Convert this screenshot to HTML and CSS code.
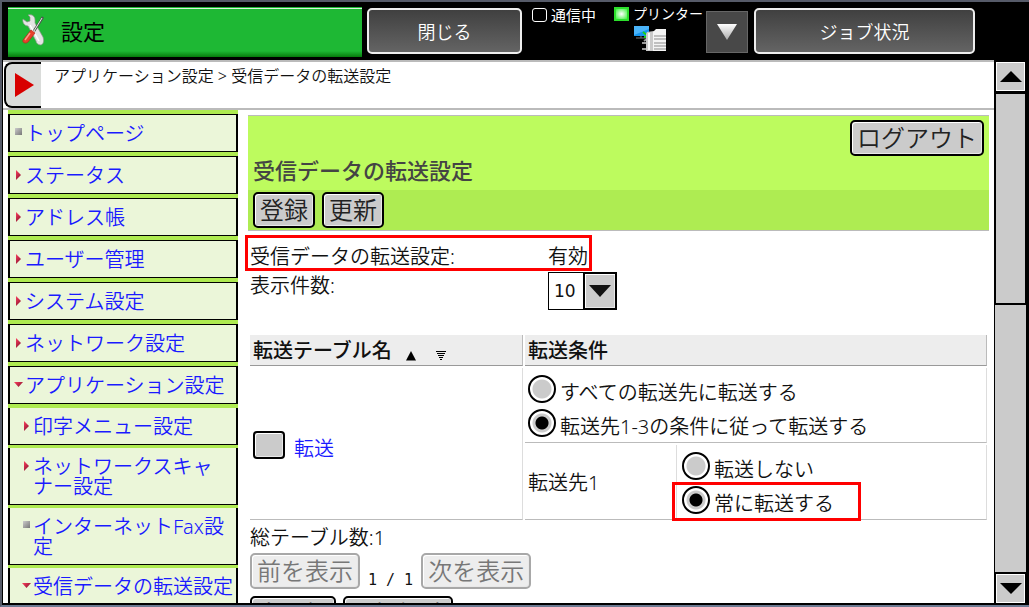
FILE: index.html
```html
<!DOCTYPE html>
<html lang="ja">
<head>
  <meta charset="UTF-8">
  <meta name="viewport" content="width=device-width, initial-scale=1.0">
  <title>受信データの転送設定</title>
  <link rel="stylesheet" href="styles.css">
</head>
<body>
  <header class="topbar">
    <div class="topbar-title">
      <svg class="tools-icon" viewBox="0 0 26 34" width="26" height="34" aria-hidden="true">
        <path d="M2 5l4 3 3-1 0-4-2-2c4-1 7 1 7 5l0 3 8 14c1 3 1 7-2 8-3 0-5-2-5-4L7 12C4 12 1 9 2 5z" fill="#e4e4e4" stroke="#8a958a" stroke-width=".7"/>
        <path d="M9 11l9 16" stroke="#fff" stroke-width="1.5"/>
        <path d="M22 3l-9 14" stroke="#4f5a50" stroke-width="2.5"/>
        <path d="M21 4l-8 13" stroke="#e8eee8" stroke-width="1"/>
        <path d="M10 16l4 3-7 9c-2 2-6 1-5-2z" fill="#e8412c" stroke="#b52a1c" stroke-width=".7"/>
        <path d="M9 19l-5 7" stroke="#ff9b86" stroke-width="1.5"/>
      </svg>
      <span>設定</span>
    </div>
    <button type="button" class="dark-btn close-btn">閉じる</button>
    <div class="status">
      <div class="status-item"><span class="lamp"></span>通信中</div>
    </div>
    <div class="status printer">
      <div class="status-item"><span class="lamp lamp-on"></span>プリンター</div>
      <svg class="printer-icon" viewBox="0 0 32 26" width="32" height="26" aria-hidden="true">
        <rect x="0" y="0" width="15" height="10" fill="#1595ee"/>
        <path d="M0 0h15v3L0 9z" fill="#4ab4fa"/>
        <path d="M2 12h10M7 10v2" stroke="#777" stroke-width="1"/>
        <path d="M9 6l5 4M14 6v5h-4" stroke="#19d219" stroke-width="2" fill="none"/>
        <path d="M8 17h5M8 23h5M10 15l3-2" stroke="#999" stroke-width="2"/>
        <path d="M13 6l7-1v20h-8V8z" fill="#c9c9c9"/>
        <path d="M15 7v17" stroke="#f6f6f6" stroke-width="2"/>
        <path d="M19 6l3-3h10v22H19z" fill="#f4f4f4"/>
        <path d="M20 10h12M20 13h12M20 17h12M20 20h12M20 23h12" stroke="#8b8b8b" stroke-width="1"/>
      </svg>
    </div>
    <button type="button" class="drop-btn" aria-label="プリンター">
      <svg viewBox="0 0 20 16" width="20" height="16" aria-hidden="true">
        <defs><linearGradient id="dropFill" x2="0" y2="1"><stop stop-color="#fff"/><stop offset="1" stop-color="#aaa"/></linearGradient></defs>
        <path d="M0 0h20L10 16z" fill="url(#dropFill)"/>
      </svg>
    </button>
    <button type="button" class="dark-btn job-btn">ジョブ状況</button>
  </header>

  <div class="viewer">
    <div class="page">
      <div class="crumbs">
        <button type="button" class="toggle-btn" aria-label="メニュー">
          <svg viewBox="0 0 19 24" width="19" height="24" aria-hidden="true"><path d="M0 0l19 12L0 24z" fill="#d80000"/></svg>
        </button>
        <p class="crumb-text">アプリケーション設定 &gt; 受信データの転送設定</p>
      </div>

      <div class="columns">
        <nav class="menu">
          <a class="menu-item" href="#"><i class="mark mark-box"></i>トップページ</a>
          <a class="menu-item" href="#"><i class="mark mark-right"></i>ステータス</a>
          <a class="menu-item" href="#"><i class="mark mark-right"></i>アドレス帳</a>
          <a class="menu-item" href="#"><i class="mark mark-right"></i>ユーザー管理</a>
          <a class="menu-item" href="#"><i class="mark mark-right"></i>システム設定</a>
          <a class="menu-item" href="#"><i class="mark mark-right"></i>ネットワーク設定</a>
          <a class="menu-item" href="#"><i class="mark mark-down"></i>アプリケーション設定</a>
          <div class="submenu">
            <a class="menu-item sub" href="#"><i class="mark mark-right"></i>印字メニュー設定</a>
            <a class="menu-item sub" href="#"><i class="mark mark-right"></i>ネットワークスキャナー設定</a>
            <a class="menu-item sub" href="#"><i class="mark mark-box"></i>インターネットFax設定</a>
            <a class="menu-item sub" href="#"><i class="mark mark-down"></i>受信データの転送設定</a>
          </div>
        </nav>

        <main class="content">
          <div class="panel-head">
            <div class="panel-title">
              <button type="button" class="btn">ログアウト</button>
              <h1>受信データの転送設定</h1>
            </div>
            <div class="panel-actions">
              <button type="button" class="btn">登録</button>
              <button type="button" class="btn">更新</button>
            </div>
          </div>

          <div class="field marked">
            <span class="field-name">受信データの転送設定:</span>
            <span>有効</span>
          </div>
          <div class="field">
            <label class="field-name" for="count">表示件数:</label>
            <div class="select-box">
              <select id="count">
                <option>10</option>
                <option>20</option>
                <option>50</option>
              </select>
              <span class="select-arrow"><svg viewBox="0 0 22 12" width="22" height="12" aria-hidden="true"><path d="M0 0h22L11 12z" fill="#111"/></svg></span>
            </div>
          </div>

          <table class="transfer">
            <colgroup><col class="col-name"><col class="col-dest"><col></colgroup>
            <thead>
              <tr>
                <th>
                  <div class="th-row">
                    転送テーブル名
                    <button type="button" class="sort" aria-label="昇順"><svg viewBox="0 0 10 10" width="10" height="10" aria-hidden="true"><path d="M5 0l5 9.500H0z" fill="#000"/></svg></button>
                    <button type="button" class="sort" aria-label="降順"><svg viewBox="0 0 10 10" width="10" height="10" aria-hidden="true"><path d="M0 .5h10M1 2.500h8M2 4.500h6M3 6.500h4M4 8.500h2" stroke="#000"/></svg></button>
                  </div>
                </th>
                <th colspan="2">転送条件</th>
              </tr>
            </thead>
            <tbody>
              <tr class="row">
                <td rowspan="2">
                  <div class="choice check-row">
                    <input type="checkbox" id="t1" class="check" aria-label="転送">
                    <a href="#" class="choice-text">転送</a>
                  </div>
                </td>
                <td colspan="2">
                  <label class="choice"><input type="radio" name="cond" class="radio"><span class="choice-text">すべての転送先に転送する</span></label>
                  <label class="choice"><input type="radio" name="cond" class="radio" checked><span class="choice-text">転送先1-3の条件に従って転送する</span></label>
                </td>
              </tr>
              <tr class="row">
                <td>転送先1</td>
                <td class="has-mark">
                  <label class="choice"><input type="radio" name="dest1" class="radio"><span class="choice-text">転送しない</span></label>
                  <label class="choice"><input type="radio" name="dest1" class="radio" checked><span class="choice-text">常に転送する</span></label>
                </td>
              </tr>
            </tbody>
          </table>

          <p class="total">総テーブル数:1</p>
          <div class="pager">
            <button type="button" class="btn" disabled>前を表示</button>
            <span class="pager-pos">1 / 1</span>
            <button type="button" class="btn" disabled>次を表示</button>
          </div>
          <div class="bulk">
            <button type="button" class="btn">全選択</button>
            <button type="button" class="btn">選択解除</button>
          </div>
        </main>
      </div>
    </div>

    <div class="scroll">
      <button type="button" class="scroll-btn" aria-label="上へ"><svg viewBox="0 0 22 11" width="22" height="11" aria-hidden="true"><path d="M0 11h22L11 0z"/></svg></button>
      <div class="scroll-track"><div class="scroll-thumb"></div></div>
      <button type="button" class="scroll-btn" aria-label="下へ"><svg viewBox="0 0 22 11" width="22" height="11" aria-hidden="true"><path d="M0 0h22L11 11z"/></svg></button>
    </div>
  </div>
</body>
</html>
```

FILE: styles.css
```css
*,
*::before,
*::after {
  box-sizing: border-box;
}
body {
  display: flex;
  flex-direction: column;
  height: 100vh;
  margin: 0;
  overflow: hidden;
  border: 2px solid #565b69;
  border-right: 0;
  border-bottom-color: #6c7a92;
  background: #000;
  color: #111;
  font-family: "Noto Sans", "Noto Sans CJK JP", sans-serif;
  font-size: 20px;
  font-weight: 350;
  line-height: 20px;
  line-break: strict;
}
button, select, input {
  margin: 0;
  padding: 0;
  font: inherit;
  color: inherit;
}
svg {
  display: block;
}
h1, p {
  margin: 0;
}
a {
  color: #1a1aff;
  text-decoration: none;
}

/* top bar */
.topbar {
  display: flex;
  flex: none;
  height: 58px;
  padding: 5px 54px 0 6px;
  color: #fff;
}
.topbar-title {
  display: flex;
  flex: 1 1 354px;
  align-items: center;
  gap: 14px;
  height: 50px;
  padding: 0 0 2px 13px;
  background: linear-gradient(#1eb834 1px, #d8f5dc 1px, #d8f5dc 2px, #1eb834 2px, #1eb834 44px, #067b0c);
  color: #000;
  font-size: 22px;
  font-weight: 400;
}
.dark-btn {
  height: 46px;
  margin-top: 1px;
  padding-top: 2px;
  border: 2px solid #eee;
  border-radius: 5px;
  background: linear-gradient(#404040, #646464);
  font-size: 18px;
}
.close-btn {
  flex: 1 1 155px;
  margin-left: 5px;
}
.job-btn {
  flex: 1 1 221px;
  margin-left: 6px;
}
.status {
  flex: none;
  width: 72px;
  margin-left: 10px;
  font-size: 15px;
  font-weight: 400;
  line-height: 16px;
  white-space: nowrap;
}
.printer {
  width: 92px;
  font-size: 14px;
  line-height: 14px;
}
.status-item {
  display: flex;
  align-items: center;
  gap: 4px;
}
.lamp {
  flex: none;
  width: 15px;
  height: 14px;
  border: 1px solid #fff;
  border-radius: 3px;
}
.lamp-on {
  border: 2px solid #2ce02c;
  border-radius: 0;
  background: radial-gradient(#fff, #3bf23b);
}
.printer-icon {
  margin: 5px 0 0 20px;
}
.drop-btn {
  display: flex;
  flex: none;
  align-items: center;
  justify-content: center;
  width: 42px;
  height: 42px;
  margin-top: 4px;
  border: 1px solid #666;
  background: #484848;
}

/* frame */
.viewer {
  display: flex;
  flex: 1;
  min-height: 0;
  padding: 0 3px 2px 1px;
}
.page {
  display: flex;
  flex: 1;
  flex-direction: column;
  min-width: 0;
  overflow: hidden;
  border-top: 2px solid #bbb;
  background: #fff;
}
.crumbs {
  display: flex;
  flex: none;
  height: 48px;
  padding-left: 1px;
  border-bottom: 2px solid #bbb;
}
.toggle-btn {
  width: 37px;
  height: 46px;
  padding-left: 9px;
  border: 2px solid #000;
  border-right: 0;
  border-radius: 8px 0 0 8px;
  background: #dadcda;
}
.crumb-text {
  padding: 4px 0 0 13px;
  font-size: 16px;
}
.columns {
  display: flex;
  flex: 1;
  gap: 10px;
  min-height: 0;
  padding: 0 5px;
}

/* side menu */
.menu {
  display: flex;
  flex: none;
  flex-direction: column;
  gap: 4px;
  width: 230px;
  padding-top: 4px;
  background: #aeea50;
}
.submenu {
  display: flex;
  flex-direction: column;
  gap: 3px;
}
.menu-item {
  display: flex;
  flex: none;
  padding: 9px 0 7px;
  border: solid #000;
  border-width: 1px 2px;
  background: #ebf6d9;
}
.sub {
  padding-left: 8px;
  border-top: 0;
}
.mark {
  flex: none;
  width: 15px;
  height: 20px;
}
.mark::before {
  content: "";
  display: block;
  margin: 4px 0 0 6px;
}
.mark-box::before {
  width: 7px;
  height: 7px;
  margin-left: 5px;
  background: linear-gradient(135deg, #ccc, #777);
}
.mark-right::before {
  width: 5px;
  height: 10px;
  background: linear-gradient(135deg, #ff4060, #80102c);
  clip-path: polygon(0 0, 100% 50%, 0 100%);
}
.mark-down::before {
  width: 9px;
  height: 5px;
  margin-left: 4px;
  margin-top: 6px;
  background: linear-gradient(135deg, #ff4060, #80102c);
  clip-path: polygon(0 0, 100% 0, 50% 100%);
}

/* content */
.content {
  flex: 1;
  min-width: 0;
  padding-top: 5px;
}
.btn {
  height: 36px;
  padding: 0 5px;
  border: 2px solid #000;
  border-radius: 5px;
  background: #cbcbcb;
  box-shadow: inset 1px 1px #fff, inset -1px -1px #e8e8e8;
  color: #222;
  font-size: 24px;
  line-height: 24px;
  white-space: nowrap;
}
.btn:disabled {
  border-color: #a8a8a8;
  background: #ededed;
  color: #777;
}
.panel-head {
  border: solid #bbb;
  border-width: 1px 0;
}
.panel-title {
  display: flex;
  flex-direction: column;
  align-items: flex-end;
  height: 74px;
  padding: 4px 5px 0;
  background: #bdfb5e;
}
.panel-title h1 {
  align-self: flex-start;
  color: #444;
  font-size: 22px;
  font-weight: 500;
  line-height: 28px;
}
.panel-actions {
  display: flex;
  gap: 7px;
  height: 40px;
  padding: 2px 5px;
  background: #aeec52;
}
.field {
  display: flex;
  padding-left: 2px;
}
.field > * {
  padding-top: 4px;
}
.field-name {
  width: 298px;
}
.field .select-box {
  padding-top: 0;
}
.marked {
  position: relative;
  height: 41px;
  padding-top: 12px;
}
.marked::after {
  content: "";
  position: absolute;
  top: 4px;
  left: -3px;
  width: 347px;
  height: 36px;
  border: 3px solid #f00;
}
.select-box {
  position: relative;
}
.select-box select {
  display: block;
  width: 69px;
  height: 38px;
  padding-left: 5px;
  border: 1px solid #000;
  border-radius: 0;
  appearance: none;
  background: #fff;
  font-family: "DejaVu Sans", sans-serif;
  font-size: 17px;
  font-weight: 400;
}
.select-arrow {
  position: absolute;
  top: 0;
  right: 0;
  display: flex;
  align-items: center;
  justify-content: center;
  width: 34px;
  height: 38px;
  border: 2px solid #000;
  background: #cbcbcb;
  box-shadow: inset 1px 1px #fff, inset -1px -1px #e8e8e8;
  pointer-events: none;
}

/* transfer table */
.transfer {
  width: 100%;
  margin-top: 23px;
  border-spacing: 2px;
  table-layout: fixed;
}
.col-name {
  width: 273px;
}
.col-dest {
  width: 152px;
}
.transfer th {
  height: 31px;
  padding: 2px 3px 0;
  border: solid #bbb;
  border-width: 0 1px 1px 0;
  border-bottom-color: #999;
  background: #ededed;
  font-weight: 500;
  text-align: left;
}
.th-row {
  display: flex;
}
.sort {
  width: 10px;
  height: 10px;
  margin: 10px 6px 0 14px;
  border: 0;
  background: none;
}
.row {
  height: 75px;
}
.transfer td {
  padding: 2px 3px 0;
  border: solid #ddd;
  border-width: 0 1px 1px 0;
  border-bottom-color: #bbb;
}
.choice {
  display: flex;
  align-items: center;
  gap: 4px;
  height: 34px;
}
.choice-text {
  padding-top: 8px;
}
.check-row {
  gap: 9px;
}
.radio {
  flex: none;
  width: 28px;
  height: 28px;
  border: 2px solid #000;
  border-radius: 50%;
  appearance: none;
  background: radial-gradient(circle, #cbcbcb 9px, #fff 10px);
}
.radio:checked {
  background: radial-gradient(circle, #000 6px, #cbcbcb 7px, #cbcbcb 9px, #fff 10px);
}
.check {
  width: 32px;
  height: 28px;
  border: 2px solid #000;
  border-radius: 4px;
  appearance: none;
  background: #cbcbcb;
  box-shadow: inset 1px 1px #fff, inset -1px -1px #e8e8e8;
}
.has-mark {
  position: relative;
}
.has-mark::after {
  content: "";
  position: absolute;
  top: 37px;
  left: -7px;
  width: 189px;
  height: 39px;
  border: 3px solid #f00;
}
.total {
  padding: 6px 2px 5px;
}
.pager,
.bulk {
  display: flex;
  padding-left: 2px;
}
.pager-pos {
  padding: 17px 8px 0;
  font-family: "DejaVu Sans Mono", monospace;
  font-size: 15px;
}
.bulk {
  gap: 7px;
  padding-top: 6px;
}

/* scroll bar */
.scroll {
  display: flex;
  flex: none;
  flex-direction: column;
  gap: 2px;
  width: 32px;
  padding-top: 2px;
}
.scroll-btn {
  display: flex;
  flex: none;
  align-items: center;
  justify-content: center;
  height: 29px;
  margin: 0 1px 0 2px;
  border: 1px solid #fff;
  background: #cbcbcb;
}
.scroll-track {
  flex: 1;
  margin-left: 1px;
  background: #cbcbcb;
}
.scroll-thumb {
  height: 44%;
  border: 1px solid #fff;
  outline: 2px solid #000;
  outline-offset: -1px;
  background: #cbcbcb;
}
```
